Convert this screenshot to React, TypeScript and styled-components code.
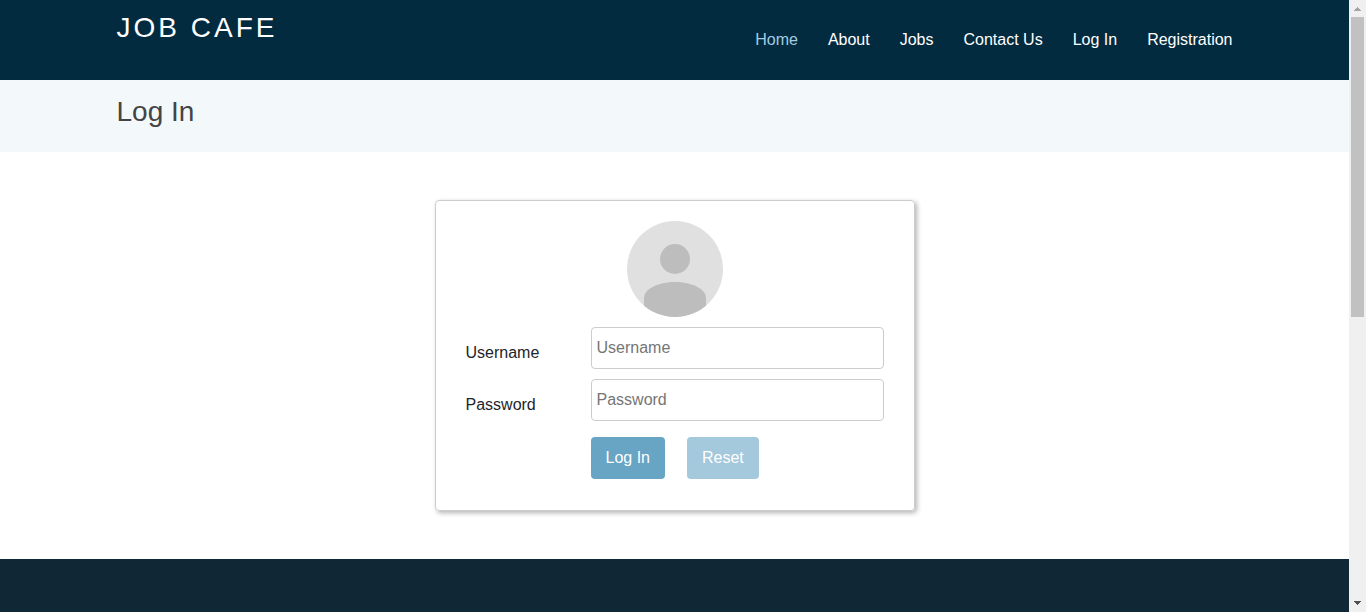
import React from "react";
import styled, { createGlobalStyle } from "styled-components";

const GlobalStyle = createGlobalStyle`
  *, *::before, *::after { box-sizing: border-box; }
  body {
    margin: 0;
    background: #fff;
    color: #212529;
    font: 16px/24px "Liberation Sans", Arial, sans-serif;
  }
`;

const Shell = styled.div`
  display: flex;
  height: 100vh;
`;

const Page = styled.div`
  display: flex;
  flex-direction: column;
  flex: 1;
  min-width: 0;
  overflow: hidden;
`;

const Container = styled.div`
  display: flex;
  justify-content: space-between;
  width: 100%;
  max-width: 1140px;
  margin: 0 auto;
  padding: 0 12px;
`;

const Header = styled.header`
  flex: none;
  min-height: 80px;
  background: #032b3f;
`;

const Brand = styled.a`
  padding-top: 11px;
  color: #fff;
  font-size: 28px;
  line-height: 34px;
  letter-spacing: 3px;
  text-decoration: none;
`;

const Nav = styled.nav`
  display: flex;
  gap: 30px;
  padding-top: 28px;
`;

const NavLink = styled.a<{ $active?: boolean }>`
  color: ${(p) => (p.$active ? "#a2cce3" : "#fff")};
  text-decoration: none;
  white-space: nowrap;
`;

const TitleBar = styled.section`
  flex: none;
  padding: 15px 0 23px;
  background: #f3f8fb;
`;

const Title = styled.h1`
  margin: 0;
  color: #444;
  font-size: 28px;
  font-weight: 400;
  line-height: 34px;
`;

const Main = styled.main`
  display: flex;
  flex: none;
  justify-content: center;
  padding: 48px 16px;
`;

const Card = styled.form`
  display: flex;
  flex-direction: column;
  gap: 10px;
  width: 100%;
  max-width: 480px;
  padding: 20px 30px 31px;
  border: 1px solid #ccc;
  border-radius: 4px;
  box-shadow: 2px 2px 5px #b4b4b4;
`;

const Avatar = styled.svg`
  width: 96px;
  height: 96px;
  align-self: center;
`;

const Field = styled.div`
  display: grid;
  grid-template-columns: 125px 1fr;
`;

const Label = styled.label`
  padding-top: 14px;
`;

const Input = styled.input`
  width: 100%;
  height: 42px;
  padding: 0 5px;
  border: 1px solid #ccc;
  border-radius: 4px;
  background: #fff;
  font: inherit;
  &::placeholder { color: #757575; opacity: 1; }
`;

const Actions = styled.div`
  display: flex;
  gap: 22px;
  padding: 6px 0 0 125px;
`;

const Button = styled.button<{ $muted?: boolean }>`
  height: 42px;
  padding: 0 15px;
  border: 0;
  border-radius: 4px;
  background: ${(p) => (p.$muted ? "#a4c8dc" : "#68a4c4")};
  color: #fff;
  font: inherit;
`;

const Footer = styled.footer`
  flex: 1;
  min-height: 48px;
  background: #102735;
`;

const Scrollbar = styled.div`
  display: flex;
  flex: none;
  flex-direction: column;
  justify-content: space-between;
  align-items: center;
  width: 17px;
  background: #f0f0f0;
`;

const Arrow = styled.svg`
  flex: none;
  width: 17px;
  height: 17px;
`;

const Track = styled.div`
  flex: 1;
  width: 13px;
`;

const Thumb = styled.div`
  height: 300px;
  max-height: 100%;
  background: #c1c1c1;
`;

const links = ["Home", "About", "Jobs", "Contact Us", "Log In", "Registration"];

export default function App() {
  return (
    <>
      <GlobalStyle />
      <Shell>
        <Page>
          <Header>
            <Container>
              <Brand href="#home">JOB CAFE</Brand>
              <Nav>
                {links.map((name, i) => (
                  <NavLink key={name} href="#" $active={i === 0}>
                    {name}
                  </NavLink>
                ))}
              </Nav>
            </Container>
          </Header>
          <TitleBar>
            <Container>
              <Title>Log In</Title>
            </Container>
          </TitleBar>
          <Main>
            <Card onSubmit={(e) => e.preventDefault()}>
              <Avatar viewBox="0 0 96 96" aria-hidden="true">
                <defs>
                  <clipPath id="disc">
                    <circle cx="48" cy="48" r="48" />
                  </clipPath>
                </defs>
                <circle cx="48" cy="48" r="48" fill="#e0e0e0" />
                <g fill="#bdbdbd" clipPath="url(#disc)">
                  <circle cx="48" cy="38" r="15" />
                  <path d="M17 96V77C17 68 31 61 48 61S79 68 79 77V96Z" />
                </g>
              </Avatar>
              <Field>
                <Label htmlFor="username">Username</Label>
                <Input id="username" type="text" placeholder="Username" />
              </Field>
              <Field>
                <Label htmlFor="password">Password</Label>
                <Input id="password" type="password" placeholder="Password" />
              </Field>
              <Actions>
                <Button type="submit">Log In</Button>
                <Button type="reset" $muted>
                  Reset
                </Button>
              </Actions>
            </Card>
          </Main>
          <Footer />
        </Page>
        <Scrollbar aria-hidden="true">
          <Arrow viewBox="0 0 17 17" shapeRendering="crispEdges">
            <path d="M8 7h1v1h1v1h1v1h1v1H5v-1h1V9h1V8h1z" fill="#a3a3a3" />
          </Arrow>
          <Track>
            <Thumb />
          </Track>
          <Arrow viewBox="0 0 17 17" shapeRendering="crispEdges">
            <path d="M5 6h7v1h-1v1h-1v1H9v1H8V9H7V8H6V7H5z" fill="#505050" />
          </Arrow>
        </Scrollbar>
      </Shell>
    </>
  );
}
